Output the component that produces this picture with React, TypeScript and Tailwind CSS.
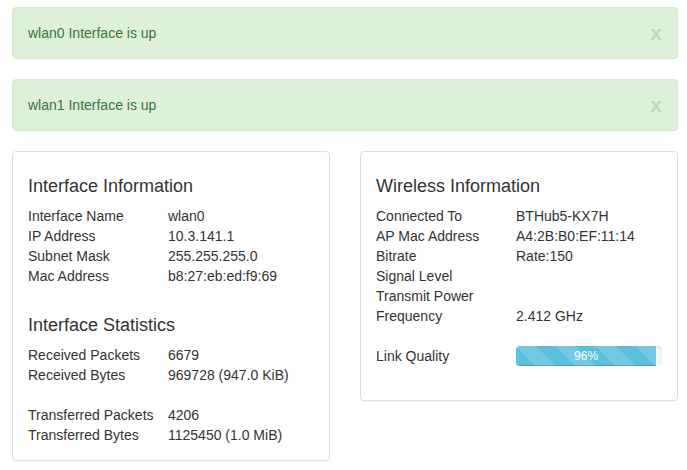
import React from "react";

type Row = [string, string] | null;

const interfaceInfo: Row[] = [
  ["Interface Name", "wlan0"],
  ["IP Address", "10.3.141.1"],
  ["Subnet Mask", "255.255.255.0"],
  ["Mac Address", "b8:27:eb:ed:f9:69"],
];

const interfaceStats: Row[] = [
  ["Received Packets", "6679"],
  ["Received Bytes", "969728 (947.0 KiB)"],
  null,
  ["Transferred Packets", "4206"],
  ["Transferred Bytes", "1125450 (1.0 MiB)"],
];

const wirelessInfo: Row[] = [
  ["Connected To", "BTHub5-KX7H"],
  ["AP Mac Address", "A4:2B:B0:EF:11:14"],
  ["Bitrate", "Rate:150"],
  ["Signal Level", ""],
  ["Transmit Power", ""],
  ["Frequency", "2.412 GHz"],
  null,
];

function Alert({ text }: { text: string }) {
  return (
    <div className="flex items-center justify-between rounded-[4px] border border-[#d6e9c6] bg-[#dff0d8] px-[15px] py-[15px] text-[#3c763d]">
      <span className="leading-[20px]">{text}</span>
      <span className="text-[21px] font-bold leading-[20px] opacity-20">x</span>
    </div>
  );
}

function Rows({ rows }: { rows: Row[] }) {
  return (
    <div className="flex flex-col">
      {rows.map((r, i) =>
        r ? (
          <div key={i} className="flex h-[20px] leading-[20px]">
            <span className="w-[140px] shrink-0">{r[0]}</span>
            <span>{r[1]}</span>
          </div>
        ) : (
          <div key={i} className="h-[20px]" />
        )
      )}
    </div>
  );
}

function Heading({ children }: { children: React.ReactNode }) {
  return <h4 className="mt-[9px] mb-[10px] text-[18px] leading-[20px]">{children}</h4>;
}

function Panel({ children }: { children: React.ReactNode }) {
  return (
    <div className="w-[318px] rounded-[4px] border border-[#dddddd] bg-white p-[15px] shadow-[0_1px_1px_rgba(0,0,0,0.05)]">
      {children}
    </div>
  );
}

export default function App() {
  return (
    <div className="min-h-[470px] bg-white pt-[7px] pl-[12px] pr-[9px] font-['Liberation_Sans',Arial,sans-serif] text-[14px] text-[#333333]">
      <div className="flex flex-col gap-[20px]">
        <Alert text="wlan0 Interface is up" />
        <Alert text="wlan1 Interface is up" />
      </div>

      <div className="mt-[20px] flex items-start gap-[30px]">
        {/* Left - interface */}
        <Panel>
          <Heading>Interface Information</Heading>
          <Rows rows={interfaceInfo} />
          <div className="h-[20px]" />
          <Heading>Interface Statistics</Heading>
          <Rows rows={interfaceStats} />
        </Panel>

        {/* Right - wireless */}
        <Panel>
          <Heading>Wireless Information</Heading>
          <Rows rows={wirelessInfo} />
          <div className="mb-[19px] flex h-[20px] leading-[20px]">
            <span className="w-[140px] shrink-0">Link Quality</span>
            <div className="h-[20px] flex-1 overflow-hidden rounded-[4px] bg-[#f5f5f5] shadow-[inset_0_1px_2px_rgba(0,0,0,0.1)]">
              <div
                className="h-full bg-[#5bc0de] bg-[linear-gradient(45deg,rgba(255,255,255,.15)_25%,transparent_25%,transparent_50%,rgba(255,255,255,.15)_50%,rgba(255,255,255,.15)_75%,transparent_75%,transparent)] bg-[length:40px_40px] text-center text-[12px] leading-[20px] text-white shadow-[inset_0_-1px_0_rgba(0,0,0,0.15)]"
                style={{ width: "96%" }}
              >
                96%
              </div>
            </div>
          </div>
        </Panel>
      </div>
    </div>
  );
}
